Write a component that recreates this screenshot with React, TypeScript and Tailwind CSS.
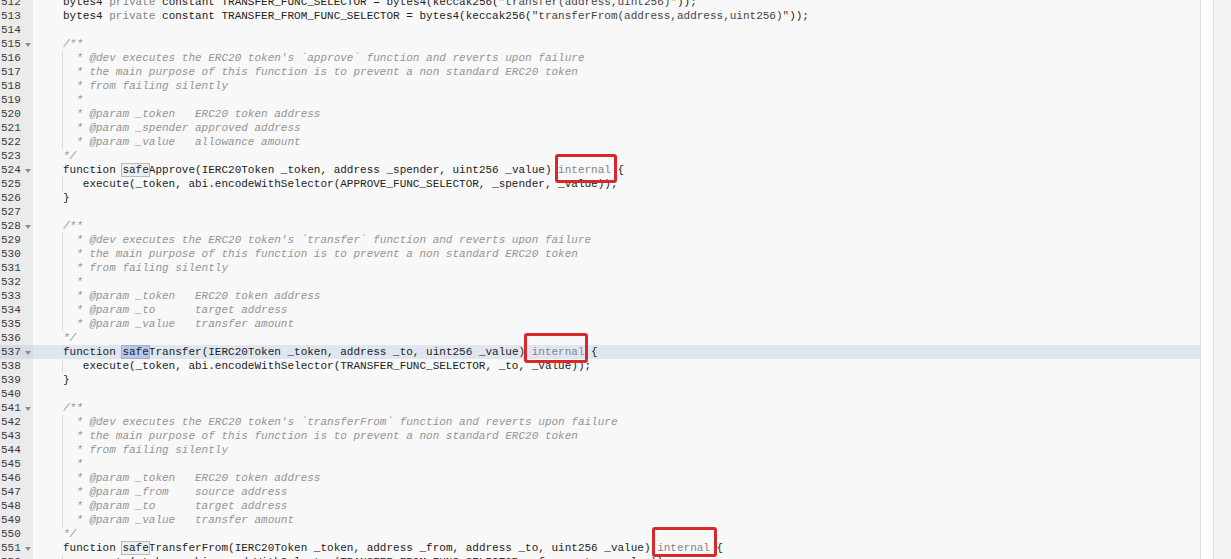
import React from "react";

type Seg = { t: string; c?: string; mark?: "occ" | "sel"; box?: string };
type Line = { n: number; segs: Seg[]; guide?: boolean; fold?: boolean; active?: boolean };

const cm = "text-[#949494] italic";
const mod = "text-[#858585]";
const str = "text-[#444]";

const comment = (t: string): Seg[] => [{ t, c: cm }];

const lines: Line[] = [
  {
    n: 512,
    segs: [
      { t: "bytes4 " },
      { t: "private", c: mod },
      { t: " constant TRANSFER_FUNC_SELECTOR = bytes4(keccak256(" },
      { t: '"transfer(address,uint256)"', c: str },
      { t: "));" },
    ],
  },
  {
    n: 513,
    segs: [
      { t: "bytes4 " },
      { t: "private", c: mod },
      { t: " constant TRANSFER_FROM_FUNC_SELECTOR = bytes4(keccak256(" },
      { t: '"transferFrom(address,address,uint256)"', c: str },
      { t: "));" },
    ],
  },
  { n: 514, segs: [] },
  { n: 515, segs: comment("/**"), fold: true },
  { n: 516, segs: comment("  * @dev executes the ERC20 token's `approve` function and reverts upon failure"), guide: true },
  { n: 517, segs: comment("  * the main purpose of this function is to prevent a non standard ERC20 token"), guide: true },
  { n: 518, segs: comment("  * from failing silently"), guide: true },
  { n: 519, segs: comment("  *"), guide: true },
  { n: 520, segs: comment("  * @param _token   ERC20 token address"), guide: true },
  { n: 521, segs: comment("  * @param _spender approved address"), guide: true },
  { n: 522, segs: comment("  * @param _value   allowance amount"), guide: true },
  { n: 523, segs: comment("*/") },
  {
    n: 524,
    fold: true,
    segs: [
      { t: "function " },
      { t: "safe", mark: "occ" },
      { t: "Approve(IERC20Token _token, address _spender, uint256 _value) " },
      { t: "internal", c: mod, box: "left-[-3px] top-[-9px] w-[62px] h-[29px]" },
      { t: " {" },
    ],
  },
  { n: 525, segs: [{ t: "   execute(_token, abi.encodeWithSelector(APPROVE_FUNC_SELECTOR, _spender, _value));" }], guide: true },
  { n: 526, segs: [{ t: "}" }] },
  { n: 527, segs: [] },
  { n: 528, segs: comment("/**"), fold: true },
  { n: 529, segs: comment("  * @dev executes the ERC20 token's `transfer` function and reverts upon failure"), guide: true },
  { n: 530, segs: comment("  * the main purpose of this function is to prevent a non standard ERC20 token"), guide: true },
  { n: 531, segs: comment("  * from failing silently"), guide: true },
  { n: 532, segs: comment("  *"), guide: true },
  { n: 533, segs: comment("  * @param _token   ERC20 token address"), guide: true },
  { n: 534, segs: comment("  * @param _to      target address"), guide: true },
  { n: 535, segs: comment("  * @param _value   transfer amount"), guide: true },
  { n: 536, segs: comment("*/") },
  {
    n: 537,
    fold: true,
    active: true,
    segs: [
      { t: "function " },
      { t: "safe", mark: "sel" },
      { t: "Transfer(IERC20Token _token, address _to, uint256 _value) " },
      { t: "internal", c: mod, box: "left-[-8px] top-[-12px] w-[64px] h-[30px]" },
      { t: " {" },
    ],
  },
  { n: 538, segs: [{ t: "   execute(_token, abi.encodeWithSelector(TRANSFER_FUNC_SELECTOR, _to, _value));" }], guide: true },
  { n: 539, segs: [{ t: "}" }] },
  { n: 540, segs: [] },
  { n: 541, segs: comment("/**"), fold: true },
  { n: 542, segs: comment("  * @dev executes the ERC20 token's `transferFrom` function and reverts upon failure"), guide: true },
  { n: 543, segs: comment("  * the main purpose of this function is to prevent a non standard ERC20 token"), guide: true },
  { n: 544, segs: comment("  * from failing silently"), guide: true },
  { n: 545, segs: comment("  *"), guide: true },
  { n: 546, segs: comment("  * @param _token   ERC20 token address"), guide: true },
  { n: 547, segs: comment("  * @param _from    source address"), guide: true },
  { n: 548, segs: comment("  * @param _to      target address"), guide: true },
  { n: 549, segs: comment("  * @param _value   transfer amount"), guide: true },
  { n: 550, segs: comment("*/") },
  {
    n: 551,
    fold: true,
    segs: [
      { t: "function " },
      { t: "safe", mark: "occ" },
      { t: "TransferFrom(IERC20Token _token, address _from, address _to, uint256 _value) " },
      { t: "internal", c: mod, box: "left-[-5px] top-[-14px] w-[65px] h-[30px]" },
      { t: " {" },
    ],
  },
  { n: 552, segs: [{ t: "   execute(_token, abi.encodeWithSelector(TRANSFER_FROM_FUNC_SELECTOR, _from, _to, _value));" }], guide: true },
  { n: 553, segs: [{ t: "}" }] },
];

const FoldArrow = () => (
  <svg width="6" height="4" viewBox="0 0 6 4" className="ml-[4px] mt-[1px]">
    <path d="M0 0 L6 0 L3 4 Z" fill="#8c8c8c" />
  </svg>
);

const Segment = ({ s }: { s: Seg }) => {
  if (s.mark === "occ")
    return <span className="outline outline-1 outline-[#b9b9b9] bg-[#efefef]">{s.t}</span>;
  if (s.mark === "sel")
    return <span className="outline outline-1 outline-[#9fb2d4] bg-[#b6c8e6]">{s.t}</span>;
  if (s.box)
    return (
      <span className={`relative inline-block h-[14px] ${s.c ?? ""}`}>
        {s.t}
        <span className={`absolute ${s.box} border-[3px] border-[#d8282c] rounded-[3px]`} />
      </span>
    );
  return <span className={s.c}>{s.t}</span>;
};

export default function App() {
  return (
    <div className="flex h-[559px] w-[1231px] overflow-hidden bg-[#f8f8f8] font-['Liberation_Mono','DejaVu_Sans_Mono',monospace] text-[11px] leading-[14px] text-[#222]">
      <div className="flex-1 -mt-[5px]">
        {lines.map((l) => (
          <div key={l.n} className={`flex h-[14px] ${l.active ? "bg-[#dfe6f0]" : ""}`}>
            <div
              className={`flex w-[33px] shrink-0 items-center text-[#3a3a3a] ${
                l.active ? "bg-[#d6dde8]" : "bg-[#ebebeb]"
              }`}
            >
              <span className="pl-[1px]">{l.n}</span>
              {l.fold && <FoldArrow />}
            </div>
            <div className="w-[29px] shrink-0" />
            <div className={`w-px shrink-0 ${l.guide ? "bg-[#dadada]" : ""}`} />
            <div className="whitespace-pre">
              {l.segs.map((s, i) => (
                <Segment key={i} s={s} />
              ))}
            </div>
          </div>
        ))}
      </div>
      <div className="w-[13px] shrink-0 border-l border-[#dcdcdf] bg-white" />
      <div className="w-[18px] shrink-0 border-l border-[#e2e2e6] bg-[#f3f3f5]" />
    </div>
  );
}
